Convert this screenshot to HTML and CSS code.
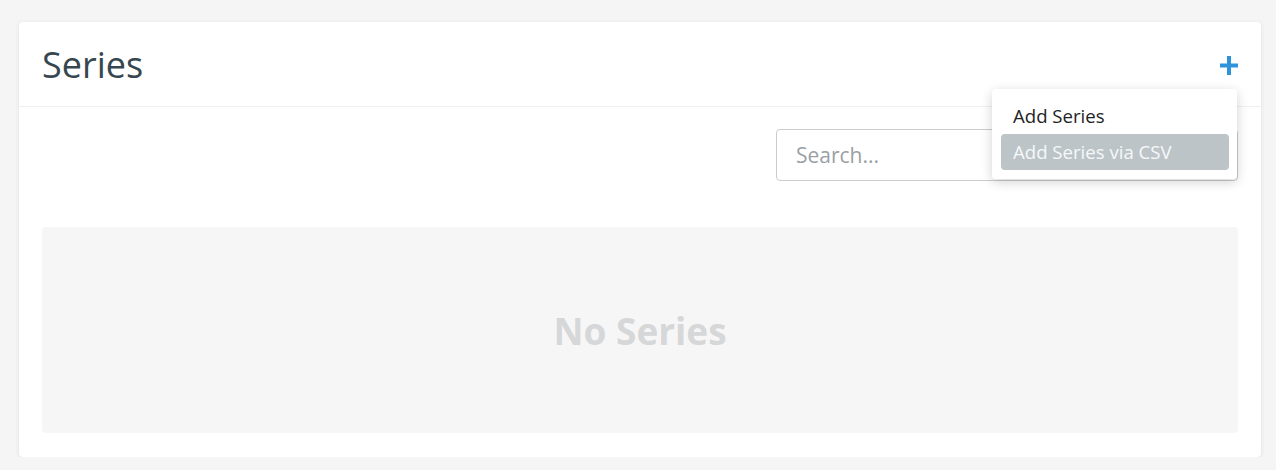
FILE: index.html
```html
<!DOCTYPE html>
<html>
<head>
<meta charset="utf-8">
<link rel="stylesheet" href="styles.css">
</head>
<body>
<div class="card">
  <div class="card-header">
    <h1 class="title">Series</h1>
    <button class="add-btn" aria-label="Add">
      <svg width="18" height="19" viewBox="0 0 18 19"><rect x="7" y="0" width="4" height="19" fill="#2f93dc"/><rect x="0" y="7.5" width="18" height="4" fill="#2f93dc"/></svg>
    </button>
    <div class="dropdown">
      <div class="dd-item">Add Series</div>
      <div class="dd-item active">Add Series via CSV</div>
    </div>
  </div>
  <div class="card-body">
    <div class="search-row">
      <input class="search" type="text" placeholder="Search...">
    </div>
    <div class="empty">No Series</div>
  </div>
</div>
</body>
</html>
```
FILE: styles.css
```css
html, body {
  margin: 0;
  padding: 0;
}
body {
  background: #f5f5f5;
  font-family: "Open Sans", "Liberation Sans", sans-serif;
  padding: 22px 15px 0 19px;
}
.card {
  background: #fff;
  border-radius: 4px;
  box-shadow: 0 1px 5px rgba(0,0,0,0.09);
  height: 435px;
  box-sizing: border-box;
}
.card-header {
  position: relative;
  height: 84px;
  border-bottom: 1px solid #efefef;
  display: flex;
  align-items: center;
  justify-content: space-between;
  padding: 0 23px;
}
.title {
  margin: 0;
  font-weight: 400;
  font-size: 36px;
  color: #37474f;
}
.add-btn {
  background: none;
  border: 0;
  padding: 0;
  margin-top: 2px;
  display: flex;
}
.dropdown {
  position: absolute;
  top: 67px;
  right: 24px;
  width: 245px;
  box-sizing: border-box;
  background: #fff;
  border-radius: 4px;
  box-shadow: 0 3px 12px rgba(0,0,0,0.18);
  padding: 9px 8px 9px 9px;
  z-index: 5;
}
.dd-item {
  height: 36px;
  line-height: 36px;
  padding-left: 12px;
  font-size: 18.6px;
  color: #1e2326;
  border-radius: 4px;
}
.dd-item.active {
  background: #bcc4c8;
  color: #f6f8f9;
}
.card-body {
  padding: 22px 23px 24px;
}
.search-row {
  display: flex;
  justify-content: flex-end;
}
.search {
  width: 462px;
  height: 52px;
  box-sizing: border-box;
  border: 1px solid #c9cdd0;
  border-radius: 4px;
  padding: 0 19px;
  font-family: inherit;
  font-size: 21px;
  color: #333;
  outline: none;
}
.search::placeholder {
  color: #9aa0a4;
}
.empty {
  margin-top: 46px;
  height: 206px;
  background: #f6f6f6;
  border-radius: 4px;
  display: flex;
  align-items: center;
  justify-content: center;
  font-weight: 700;
  font-size: 37px;
  color: #d6d7d8;
}
```
